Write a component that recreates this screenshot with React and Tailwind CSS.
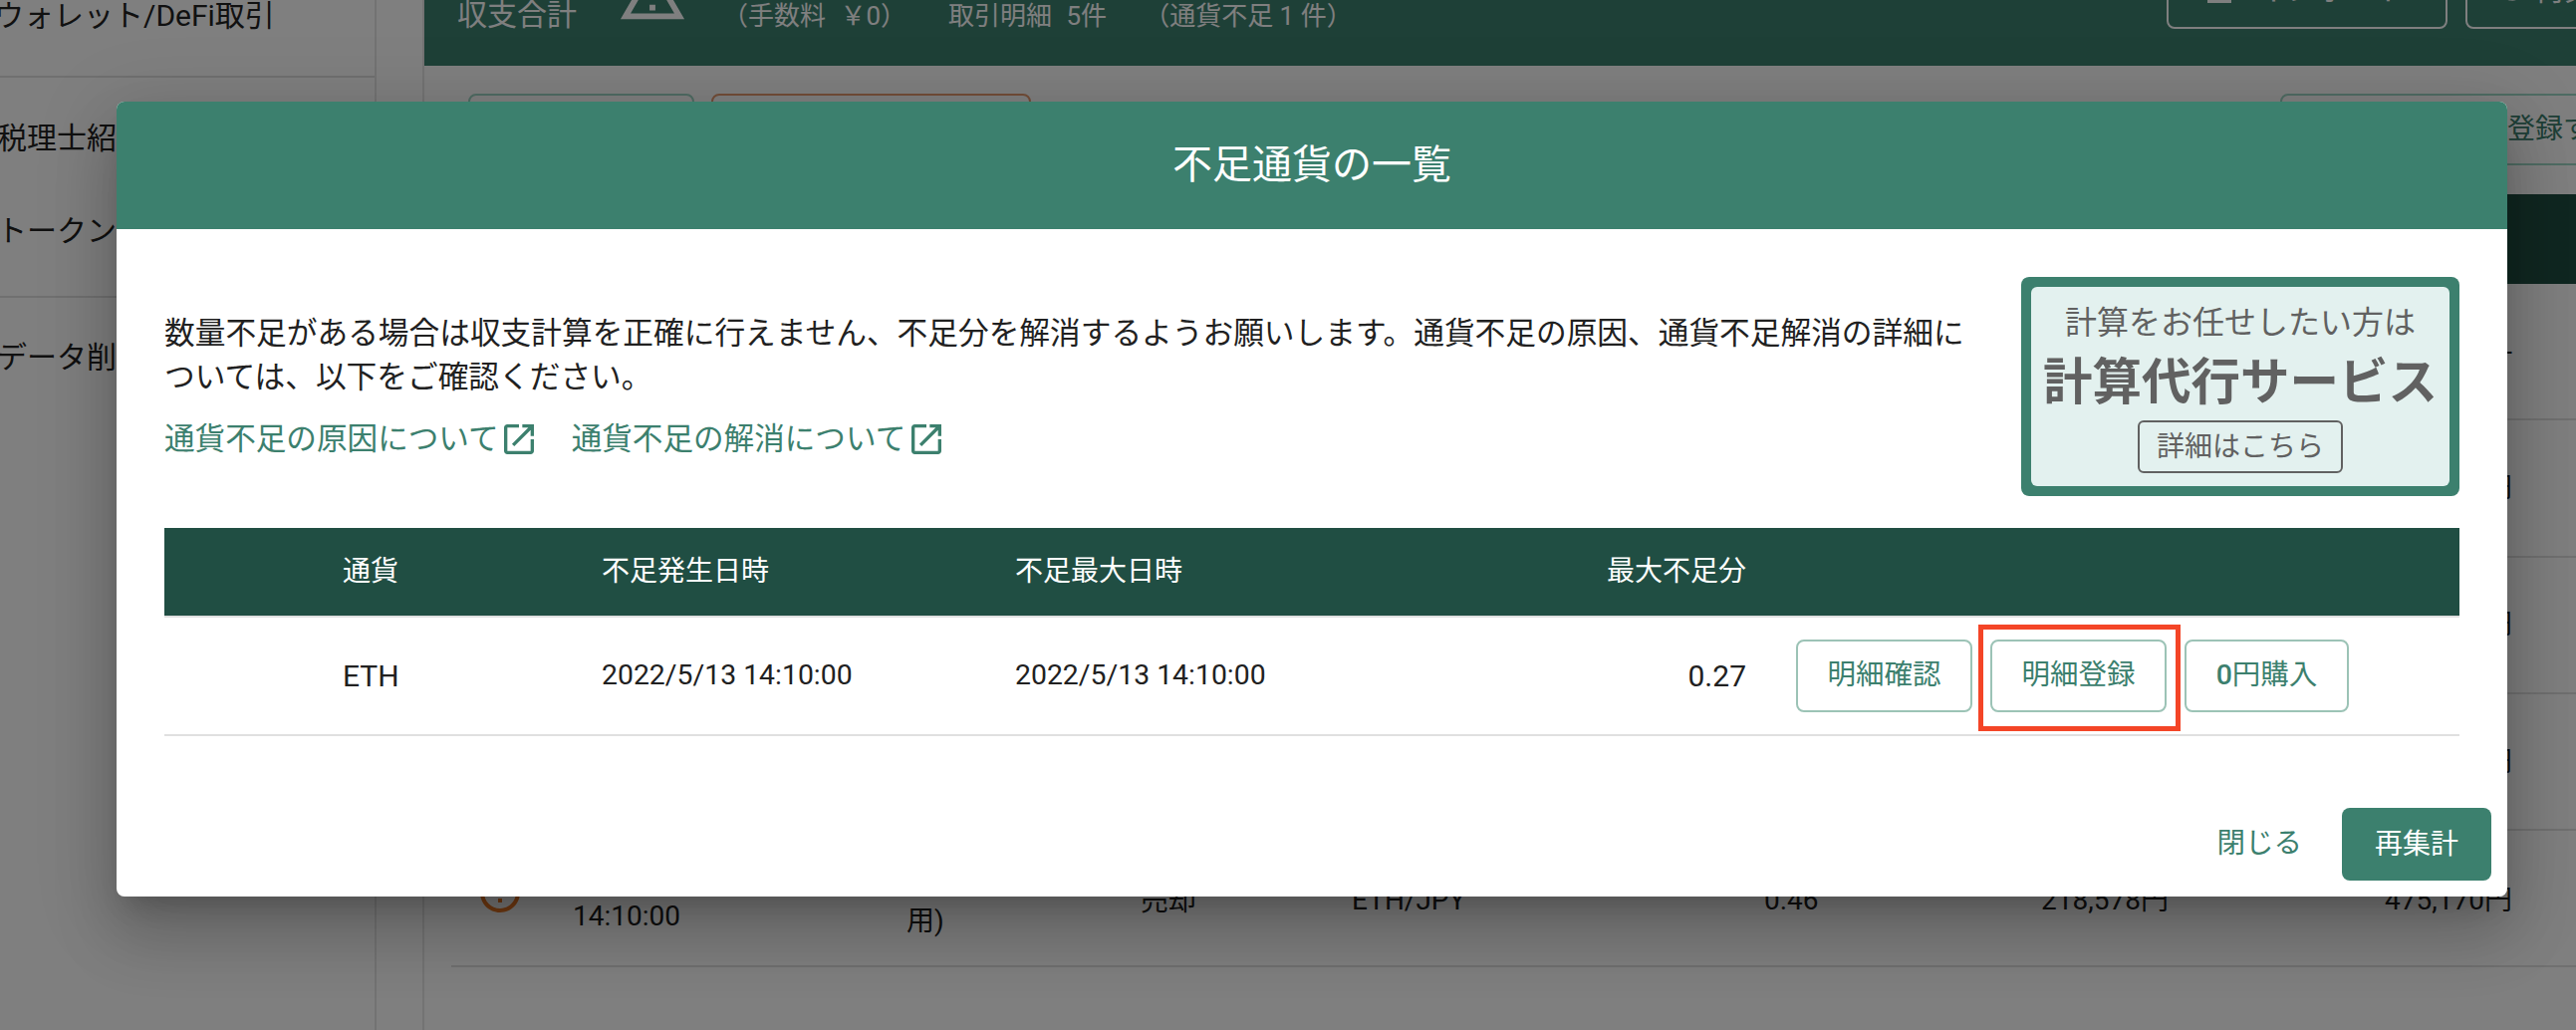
import React from 'react';

const rowGrid = 'grid grid-cols-[122px_335px_235px_212px_414px_200px_206px_345px] items-center h-[137.3px] border-b-2 border-[#e0e0e0] text-[28px] text-[#212121]';

const OpenIcon = () => (
  <svg viewBox="3 3 18 18" className="w-[30px] h-[30px] fill-[#3c806e] shrink-0">
    <path d="M19 19H5V5h7V3H5c-1.11 0-2 .9-2 2v14c0 1.1.89 2 2 2h14c1.1 0 2-.9 2-2v-7h-2v7zM14 3v2h3.59l-9.83 9.83 1.41 1.41L19 6.41V10h2V3h-7z" />
  </svg>
);

const PageBehind = () => (
  <div className="flex w-full h-full">
    {/* Sidebar */}
    <div className="w-[378px] h-full shrink-0 border-r-2 border-[#e6e6e6] text-[30px] text-[#222] overflow-hidden">
      <div className="h-[87px] border-b-2 border-[#e0e0e0] pt-[3px] -mt-[9px] box-border">
        <div className="-ml-[6px] whitespace-nowrap leading-[44px]">ウォレット/DeFi取引</div>
      </div>
      <div className="h-[221px] border-b-2 border-[#e0e0e0] flex flex-col">
        <div className="-ml-[3px] mt-[39px] leading-[44px] whitespace-nowrap">税理士紹介</div>
        <div className="-ml-[3px] mt-[49px] leading-[44px] whitespace-nowrap">トークン</div>
      </div>
      <div className="-ml-[3px] mt-[38px] leading-[44px] whitespace-nowrap">データ削除</div>
    </div>
    <div className="w-[48px] shrink-0 border-r-2 border-[#e6e6e6]" />

    {/* Main */}
    <div className="flex-1 min-w-0 flex flex-col overflow-hidden">
      <div className="h-[66px] shrink-0 bg-[#3c806e] text-white flex items-start overflow-hidden">
        <div className="ml-[33px] text-[30px] leading-[44px] -mt-[7px] whitespace-nowrap">収支合計</div>
        <svg viewBox="0 0 24 24" className="ml-[41px] -mt-[42px] w-[70px] h-[70px] fill-white shrink-0">
          <path d="M12 5.99L19.53 19H4.47L12 5.99M12 2L1 21h22L12 2zm1 14h-2v2h2v-2zm0-6h-2v4h2v-4z" />
        </svg>
        <div className="ml-[35px] text-[26px] leading-[44px] -mt-[6px] whitespace-nowrap [word-spacing:8px]">（手数料 ￥0）</div>
        <div className="ml-[42px] text-[26px] leading-[44px] -mt-[6px] whitespace-nowrap [word-spacing:8px]">取引明細 5件</div>
        <div className="ml-[37px] text-[26px] leading-[44px] -mt-[6px] whitespace-nowrap">（通貨不足 1 件）</div>
        <div className="ml-auto flex items-start gap-[18px] -mr-[60px] shrink-0">
          <div className="w-[282px] h-[80px] -mt-[51px] rounded-[8px] border-2 border-white flex items-center justify-center gap-[26px] text-[30px]">
            <svg viewBox="0 0 24 24" className="w-[24px] h-[24px] mt-[6px] fill-white"><rect x="0" y="19" width="24" height="4" /></svg>
            <span>インポート</span>
          </div>
          <div className="w-[171px] h-[80px] -mt-[51px] rounded-[8px] border-2 border-white flex items-center gap-[10px] pl-[34px] text-[30px]">
            <svg viewBox="0 0 24 24" className="w-[24px] h-[24px] mt-[10px] stroke-white fill-none stroke-[3]"><path d="M3 13c2 5 12 6 16 0" /></svg>
            <span>再集計</span>
          </div>
        </div>
      </div>

      <div className="h-[129px] shrink-0 flex items-start pt-[28px] pl-[44px]">
        <div className="w-[227px] h-[72px] shrink-0 rounded-[8px] border-2 border-[#9ed8c6]" />
        <div className="ml-[17px] w-[321px] h-[72px] shrink-0 rounded-[8px] border-2 border-[#e69a70]" />
        <div className="ml-[1254px] w-[480px] h-[72px] shrink-0 rounded-[8px] border-2 border-[#9ed8c6] flex items-center pl-[142px] text-[28px] text-[#3c806e] whitespace-nowrap">
          明細を登録する
        </div>
      </div>

      <div className="h-[90px] shrink-0 bg-[#204e43]" />

      <div className="pl-[27px]">
        <div className={rowGrid}>
          <div className="col-start-8 text-right">-</div>
        </div>
        <div className={rowGrid}>
          <div className="col-start-8 text-right">475,170円</div>
        </div>
        <div className={rowGrid}>
          <div className="col-start-8 text-right">475,170円</div>
        </div>
        <div className={rowGrid}>
          <div className="col-start-8 text-right">475,170円</div>
        </div>
        <div className={rowGrid}>
          <svg viewBox="0 0 24 24" className="w-[48px] h-[48px] -mt-[12px] ml-[25px] fill-[#f07a24]">
            <path d="M11 15h2v2h-2zm0-8h2v6h-2zm.99-5C6.47 2 2 6.48 2 12s4.47 10 9.99 10C17.52 22 22 17.52 22 12S17.52 2 11.99 2zM12 20c-4.42 0-8-3.58-8-8s3.58-8 8-8 8 3.58 8 8-3.58 8-8 8z" />
          </svg>
          <div className="leading-[44px] -mt-[8px]">2022/5/13<br />14:10:00</div>
          <div className="leading-[44px] pt-[2px] whitespace-nowrap">取引所(個人<br />用)</div>
          <div className="pt-[6px]">売却</div>
          <div className="pt-[4px]">ETH/JPY</div>
          <div className="pt-[4px]">0.46</div>
          <div className="col-start-7 text-right pt-[4px]">218,578円</div>
          <div className="text-right pt-[4px]">475,170円</div>
        </div>
      </div>
    </div>
  </div>
);

const Modal = () => (
  <div className="absolute left-[117px] top-[102px] w-[2400px] h-[798px] bg-white rounded-[8px] overflow-hidden flex flex-col">
    <div className="h-[128px] shrink-0 bg-[#3c806e] text-white text-[40px] flex items-center justify-center">
      不足通貨の一覧
    </div>

    <div className="flex-1 flex flex-col px-[48px] pt-[48px] pb-[16px] relative">
      <div className="flex justify-between items-start">
        <div className="w-[1830px] pt-[35px]">
          <p className="text-[30.7px] leading-[44px] text-[#212121]">
            数量不足がある場合は収支計算を正確に行えません、不足分を解消するようお願いします。通貨不足の原因、通貨不足解消の詳細については、以下をご確認ください。
          </p>
          <div className="flex items-center mt-[25px] text-[#3c806e] text-[30.6px] leading-[30px]">
            <span>通貨不足の原因について</span>
            <span className="ml-[5px]"><OpenIcon /></span>
            <span className="ml-[38px]">通貨不足の解消について</span>
            <span className="ml-[6px]"><OpenIcon /></span>
          </div>
        </div>
        <div className="w-[440px] h-[220px] shrink-0 bg-[#3c806e] rounded-[8px] p-[10px]">
          <div className="h-full bg-[#e3f1ef] rounded-[6px] flex flex-col items-center text-[#616161]">
            <div className="text-[32px] leading-[44px] mt-[14px]">計算をお任せしたい方は</div>
            <div className="text-[49.5px] font-bold leading-[60px] mt-[8px] whitespace-nowrap">計算代行サービス</div>
            <div className="mt-[8px] w-[206px] h-[53px] rounded-[6px] border-2 border-[#616161] text-[28px] flex items-center justify-center">詳細はこちら</div>
          </div>
        </div>
      </div>

      <div className="mt-[32px] grid grid-cols-[439px_415px_461px_273px_1fr]">
        <div className="h-[88px] bg-[#204e43] text-white text-[28px] col-span-5 grid grid-cols-subgrid items-center">
          <div className="pl-[179px]">通貨</div>
          <div>不足発生日時</div>
          <div>不足最大日時</div>
          <div className="text-right">最大不足分</div>
          <div />
        </div>
        <div className="h-[121px] col-span-5 grid grid-cols-subgrid items-center border-t-2 border-b-2 border-[#e0e0e0] text-[#212121]">
          <div className="pl-[179px] text-[30px]">ETH</div>
          <div className="text-[28.4px]">2022/5/13 14:10:00</div>
          <div className="text-[28.4px]">2022/5/13 14:10:00</div>
          <div className="text-right text-[30px]">0.27</div>
          <div className="pl-[50px] flex gap-[18px] text-[#3c806e] text-[28.5px]">
            <button className="w-[177px] h-[73px] rounded-[8px] border-2 border-[#9cc3b6]">明細確認</button>
            <div className="relative">
              <button className="w-[177px] h-[73px] rounded-[8px] border-2 border-[#9cc3b6]">明細登録</button>
              <div className="absolute -left-[12px] -right-[14px] -top-[15px] -bottom-[19px] border-[5px] border-[#f44527]" />
            </div>
            <button className="w-[165px] h-[73px] rounded-[8px] border-2 border-[#9cc3b6]"><span className="font-medium">0</span>円購入</button>
          </div>
        </div>
      </div>

      <div className="mt-auto -mr-[32px] flex justify-end items-center gap-[40px]">
        <button className="text-[#3c806e] text-[28.5px]">閉じる</button>
        <button className="w-[150px] h-[73px] rounded-[8px] bg-[#3c806e] text-white text-[28px]">再集計</button>
      </div>
    </div>
  </div>
);

export default function App() {
  return (
    <div className="relative w-[2586px] h-[1034px] overflow-hidden bg-white [font-family:Roboto,'Noto_Sans_CJK_JP',sans-serif]">
      <PageBehind />
      <div className="absolute inset-0 bg-black/50" />
      <div className="absolute left-[117px] top-[102px] w-[2400px] h-[798px] rounded-[8px] shadow-[0_18px_25px_-12px_rgba(0,0,0,0.2),0_40px_63px_5px_rgba(0,0,0,0.14),0_15px_76px_13px_rgba(0,0,0,0.12)]" />
      <Modal />
    </div>
  );
}
